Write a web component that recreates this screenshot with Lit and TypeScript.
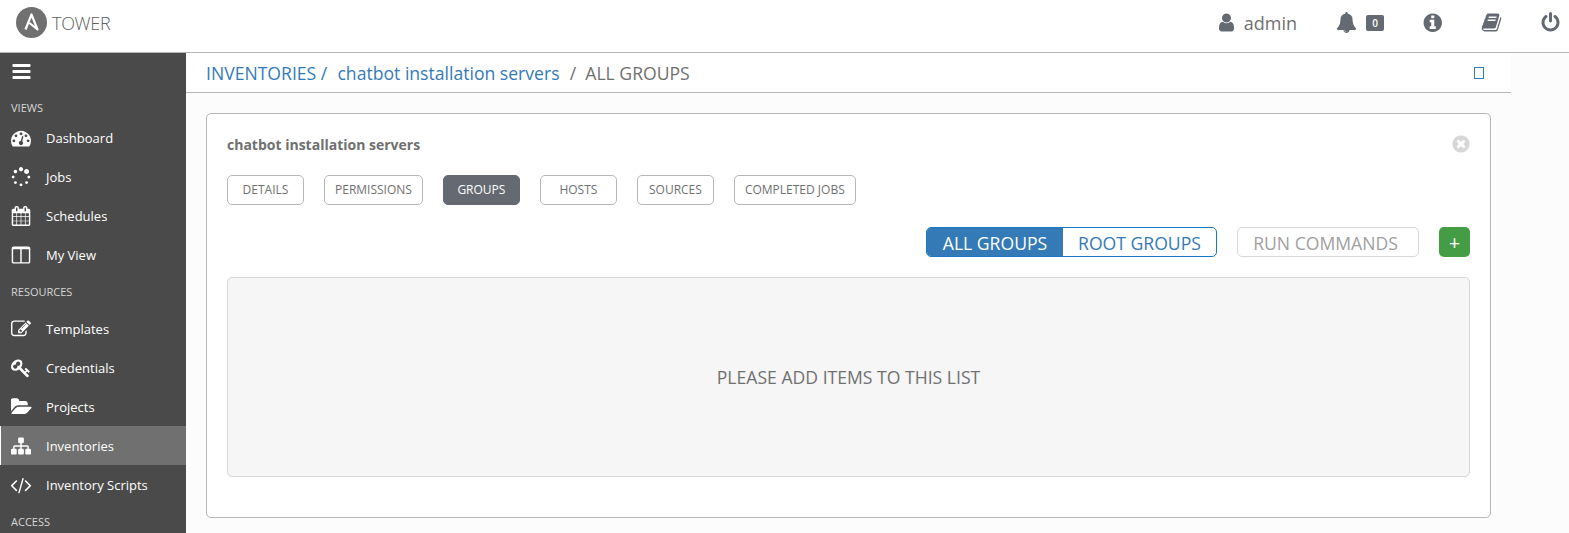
import { LitElement, html, css, svg } from 'lit'
import { customElement } from 'lit/decorators.js'

// font awesome 4 glyphs on the 1792 grid, wide ones carry their own width
const ICONS: Record<string, { d: string; w?: number }> = {
  bars: { d: 'M1664 1344v128q0 26-19 45t-45 19h-1408q-26 0-45-19t-19-45v-128q0-26 19-45t45-19h1408q26 0 45 19t19 45zm0-512v128q0 26-19 45t-45 19h-1408q-26 0-45-19t-19-45v-128q0-26 19-45t45-19h1408q26 0 45 19t19 45zm0-512v128q0 26-19 45t-45 19h-1408q-26 0-45-19t-19-45v-128q0-26 19-45t45-19h1408q26 0 45 19t19 45z' },
  bell: { d: 'M912 1696q0-16-16-16-59 0-101.500-42.500t-42.500-101.500q0-16-16-16t-16 16q0 73 51.500 124.500t124.500 51.500q16 0 16-16zm816-288q0 52-38 90t-90 38h-448q0 106-75 181t-181 75-181-75-75-181h-448q-52 0-90-38t-38-90q50-42 91-88t85-119.500 74.500-158.500 50-206 19.500-260q0-152 117-282.500t307-158.500q-8-19-8-39 0-40 28-68t68-28 68 28 28 68q0 20-8 39 190 28 307 158.500t117 282.500q0 139 19.500 260t50 206 74.500 158.500 85 119.500 91 88z' },
  user: { d: 'M1536 1399q0 109-62.500 187t-150.500 78h-854q-88 0-150.500-78t-62.500-187q0-85 8.500-160.500t31.500-152 58.500-131 94-89 134.500-34.500q131 128 313 128t313-128q76 0 134.500 34.500t94 89 58.500 131 31.500 152 8.500 160.500zm-256-887q0 159-112.500 271.500t-271.500 112.500-271.500-112.500-112.500-271.500 112.500-271.500 271.500-112.500 271.500 112.500 112.500 271.500z' },
  info: { d: 'M1152 1376v-160q0-14-9-23t-23-9h-96v-512q0-14-9-23t-23-9h-320q-14 0-23 9t-9 23v160q0 14 9 23t23 9h96v320h-96q-14 0-23 9t-9 23v160q0 14 9 23t23 9h448q14 0 23-9t9-23zm-128-896v-160q0-14-9-23t-23-9h-192q-14 0-23 9t-9 23v160q0 14 9 23t23 9h192q14 0 23-9t9-23zm640 416q0 209-103 385.500t-279.500 279.500-385.500 103-385.500-103-279.500-279.500-103-385.500 103-385.500 279.500-279.500 385.500-103 385.500 103 279.500 279.500 103 385.500z' },
  power: { d: 'M1664 896q0 156-61 298t-164 245-245 164-298 61-298-61-245-164-164-245-61-298q0-182 80.500-343t226.500-270q43-32 95.500-25t83.500 50q32 42 24.500 94.500t-49.500 84.500q-98 74-151.500 181t-53.500 228q0 104 40.500 198.500t109.500 163.500 163.500 109.500 198.500 40.500 198.500-40.500 163.500-109.500 109.500-163.500 40.500-198.500q0-121-53.500-228t-151.500-181q-42-32-49.500-84.500t24.500-94.500q31-43 84-50t95 25q146 109 226.500 270t80.500 343zm-640-768v640q0 52-38 90t-90 38-90-38-38-90v-640q0-52 38-90t90-38 90 38 38 90z' },
  book: { d: 'M1703 478q40 57 18 129l-275 906q-19 64-76.500 107.500t-122.500 43.500h-923q-77 0-148.500-53.500t-99.500-131.500q-24-67-2-127 0-4 3-27t4-37q1-8-3-21.500t-3-19.500q2-11 8-21t16.500-23.500 16.500-23.500q23-38 45-91.500t30-91.500q3-10 .5-30t-.5-28q3-11 17-28t17-23q21-36 42-92t25-90q1-9-2.500-32t.5-28q4-13 22-30.500t22-22.500q19-26 42.500-84.500t27.500-96.500q1-8-3-25.500t-2-26.500q2-8 9-18t18-23 17-21q8-12 16.500-30.500t15-35 16-36 19.500-32 26.500-23.500 36-11.500 47.500 5.500l-1 3q38-9 51-9h761q74 0 114 56t18 130l-274 906q-36 119-71.500 153.500t-128.500 34.500h-869q-27 0-38 15-11 16-1 43 24 70 144 70h923q29 0 56-15.500t35-41.500l300-987q7-22 5-57 38 15 59 43zm-1064 2q-4 13 2 22.500t20 9.500h608q13 0 25.500-9.500t16.500-22.500l21-64q4-13-2-22.500t-20-9.500h-608q-13 0-25.500 9.500t-16.500 22.500zm-83 256q-4 13 2 22.500t20 9.500h608q13 0 25.500-9.500t16.500-22.500l21-64q4-13-2-22.500t-20-9.500h-608q-13 0-25.500 9.500t-16.500 22.500z' },
  close: { d: 'M1277 1122q0-26-19-45l-181-181 181-181q19-19 19-45 0-27-19-46l-90-90q-19-19-46-19-26 0-45 19l-181 181-181-181q-19-19-45-19-27 0-46 19l-90 90q-19 19-19 46 0 26 19 45l181 181-181 181q-19 19-19 45 0 27 19 46l90 90q19 19 46 19 26 0 45-19l181-181 181 181q19 19 45 19 27 0 46-19l90-90q19-19 19-46zm387-226q0 209-103 385.500t-279.500 279.500-385.500 103-385.500-103-279.500-279.500-103-385.500 103-385.500 279.500-279.500 385.500-103 385.500 103 279.500 279.500 103 385.500z' },
  dashboard: { d: 'M384 1152q0-53-37.500-90.500t-90.500-37.500-90.500 37.500-37.500 90.500 37.500 90.500 90.500 37.500 90.500-37.500 37.500-90.500zm192-448q0-53-37.500-90.500t-90.500-37.500-90.500 37.500-37.500 90.500 37.500 90.500 90.500 37.500 90.500-37.500 37.500-90.500zm428 481l101-382q6-26-7.500-48.500t-38.500-29.500-48 6.500-30 39.500l-101 382q-60 5-107 43.500t-63 98.500q-20 77 20 146t117 89 146-20 89-117q16-60-6-117t-72-91zm660-33q0-53-37.500-90.500t-90.500-37.500-90.500 37.500-37.500 90.500 37.500 90.500 90.500 37.500 90.500-37.500 37.500-90.500zm-640-640q0-53-37.500-90.500t-90.500-37.500-90.500 37.500-37.500 90.500 37.500 90.500 90.500 37.500 90.500-37.500 37.500-90.500zm448 192q0-53-37.500-90.500t-90.500-37.500-90.500 37.500-37.500 90.500 37.500 90.500 90.500 37.500 90.500-37.500 37.500-90.500zm320 448q0 261-141 483-19 29-54 29h-1402q-35 0-54-29-141-221-141-483 0-182 71-348t191-286 286-191 348-71 348 71 286 191 191 286 71 348z' },
  jobs: { d: 'M526 1394q0 53-37.500 90.500t-90.500 37.500q-52 0-90-38t-38-90q0-53 37.500-90.500t90.500-37.500 90.500 37.500 37.500 90.500zm498 206q0 53-37.500 90.500t-90.500 37.500-90.500-37.500-37.500-90.500 37.500-90.500 90.500-37.500 90.500 37.500 37.500 90.500zm-704-704q0 53-37.500 90.500t-90.500 37.500-90.500-37.500-37.500-90.500 37.500-90.500 90.500-37.500 90.500 37.500 37.500 90.500zm1202 498q0 52-38 90t-90 38q-53 0-90.500-37.500t-37.500-90.500 37.500-90.500 90.500-37.500 90.500 37.500 37.500 90.500zm-964-996q0 66-47 113t-113 47-113-47-47-113 47-113 113-47 113 47 47 113zm1170 498q0 53-37.500 90.500t-90.500 37.500-90.500-37.500-37.500-90.500 37.500-90.500 90.500-37.500 90.500 37.500 37.500 90.500zm-640-704q0 80-56 136t-136 56-136-56-56-136 56-136 136-56 136 56 56 136zm530 206q0 93-66 158.500t-158 65.500q-93 0-158.500-65.500t-65.500-158.500q0-92 65.500-158t158.500-66q92 0 158 66t66 158z' },
  schedules: { d: 'M192 1664h288v-288h-288v288zm352 0h320v-288h-320v288zm-352-352h288v-320h-288v320zm352 0h320v-320h-320v320zm-352-384h288v-288h-288v288zm736 736h320v-288h-320v288zm-384-736h320v-288h-320v288zm768 736h288v-288h-288v288zm-384-352h320v-320h-320v320zm-352-864v-288q0-13-9.500-22.500t-22.500-9.500h-64q-13 0-22.500 9.500t-9.500 22.500v288q0 13 9.500 22.500t22.500 9.500h64q13 0 22.500-9.500t9.500-22.500zm736 864h288v-320h-288v320zm-384-384h320v-288h-320v288zm384 0h288v-288h-288v288zm32-480v-288q0-13-9.500-22.500t-22.500-9.500h-64q-13 0-22.500 9.500t-9.500 22.500v288q0 13 9.500 22.500t22.500 9.500h64q13 0 22.500-9.500t9.500-22.500zm384-64v1280q0 52-38 90t-90 38h-1408q-52 0-90-38t-38-90v-1280q0-52 38-90t90-38h128v-96q0-66 47-113t113-47h64q66 0 113 47t47 113v96h384v-96q0-66 47-113t113-47h64q66 0 113 47t47 113v96h128q52 0 90 38t38 90z' },
  view: { d: 'M224 1536h608v-1152h-640v1120q0 13 9.500 22.500t22.500 9.500zm1376-32v-1120h-640v1152h608q13 0 22.500-9.500t9.500-22.500zm128-1216v1216q0 66-47 113t-113 47h-1344q-66 0-113-47t-47-113v-1216q0-66 47-113t113-47h1344q66 0 113 47t47 113z' },
  templates: { w: 1900, d: 'M888 1184l116-116-152-152-116 116v56h96v96h56zm440-720q-16-16-33 1l-350 350q-17 17-1 33t33-1l350-350q17-17 1-33zm80 594v190q0 119-84.500 203.500t-203.500 84.500h-832q-119 0-203.500-84.500t-84.500-203.500v-832q0-119 84.500-203.500t203.500-84.500h832q63 0 117 25 15 7 18 23 3 17-9 29l-49 49q-14 14-32 8-23-6-45-6h-832q-66 0-113 47t-47 113v832q0 66 47 113t113 47h832q66 0 113-47t47-113v-126q0-13 9-22l64-64q15-15 35-7t20 29zm-96-738l288 288-672 672h-288v-288zm444 132l-92 92-288-288 92-92q28-28 68-28t68 28l152 152q28 28 28 68t-28 68z' },
  credentials: { d: 'M832 512q0-80-56-136t-136-56-136 56-56 136q0 42 19 83-41-19-83-19-80 0-136 56t-56 136 56 136 136 56 136-56 56-136q0-42-19-83 41 19 83 19 80 0 136-56t56-136zm851 704q0 17-49 66t-66 49q-9 0-28.500-16t-36.500-33-38.500-40-24.500-26l-96 96 220 220q28 28 28 68 0 42-39 81t-81 39q-40 0-68-28l-671-671q-176 131-365 131-163 0-265.500-102.500t-102.500-265.500q0-160 95-313t248-248 313-95q163 0 265.500 102.500t102.500 265.500q0 189-131 365l355 355 96-96q-3-3-26-24.500t-40-38.500-33-36.500-16-28.500q0-17 49-66t66-49q13 0 23 10 6 6 46 44.500t82 79.500 86.500 86 73 78 28.500 41z' },
  projects: { w: 1900, d: 'M1845 931q0 35-35 73l-336 396q-43 51-120.500 86.500t-143.500 35.500h-1088q-34 0-60.500-13t-26.500-43q0-35 35-73l336-396q43-51 120.500-86.500t143.500-35.500h1088q34 0 60.500 13t26.500 43zm-343-344v160h-832q-94 0-197 47.500t-164 119.500l-337 396-5 6q0-4-.5-12.500t-.5-12.500v-960q0-92 66-158t158-66h320q92 0 158 66t66 158v32h544q92 0 158 66t66 158z' },
  inventories: { d: 'M1792 1248v320q0 40-28 68t-68 28h-320q-40 0-68-28t-28-68v-320q0-40 28-68t68-28h96v-192h-512v192h96q40 0 68 28t28 68v320q0 40-28 68t-68 28h-320q-40 0-68-28t-28-68v-320q0-40 28-68t68-28h96v-192h-512v192h96q40 0 68 28t28 68v320q0 40-28 68t-68 28h-320q-40 0-68-28t-28-68v-320q0-40 28-68t68-28h96v-192q0-52 38-90t90-38h512v-192h-96q-40 0-68-28t-28-68v-320q0-40 28-68t68-28h320q40 0 68 28t28 68v320q0 40-28 68t-68 28h-96v192h512q52 0 90 38t38 90v192h96q40 0 68 28t28 68z' },
  scripts: { w: 1900, d: 'M553 1399l-50 50q-10 10-23 10t-23-10l-466-466q-10-10-10-23t10-23l466-466q10-10 23-10t23 10l50 50q10 10 10 23t-10 23l-393 393 393 393q10 10 10 23t-10 23zm591-1067l-373 1291q-4 13-15.500 19.500t-23.500 2.500l-62-17q-13-4-19.500-15.500t-2.500-24.500l373-1291q4-13 15.500-19.500t23.500-2.500l62 17q13 4 19.500 15.500t2.500 24.500zm657 651l-466 466q-10 10-23 10t-23-10l-50-50q-10-10-10-23t10-23l393-393-393-393q-10-10-10-23t10-23l50-50q10-10 23-10t23 10l466 466q10 10 10 23t-10 23z' },
}

type NavRow =
  | { section: string }
  | { label: string; icon: string; active?: boolean }

const NAV: ReadonlyArray<NavRow> = [
  { section: 'VIEWS' },
  { label: 'Dashboard', icon: 'dashboard' },
  { label: 'Jobs', icon: 'jobs' },
  { label: 'Schedules', icon: 'schedules' },
  { label: 'My View', icon: 'view' },
  { section: 'RESOURCES' },
  { label: 'Templates', icon: 'templates' },
  { label: 'Credentials', icon: 'credentials' },
  { label: 'Projects', icon: 'projects' },
  { label: 'Inventories', icon: 'inventories', active: true },
  { label: 'Inventory Scripts', icon: 'scripts' },
  { section: 'ACCESS' },
]

const TABS = ['DETAILS', 'PERMISSIONS', 'GROUPS', 'HOSTS', 'SOURCES', 'COMPLETED JOBS']

const icon = (name: string, size: number) => {
  const { d, w = 1792 } = ICONS[name]
  return html`<svg class="icon" width=${(size * w) / 1792} height=${size} viewBox="0 0 ${w} 1792" fill="currentColor">
    ${svg`<path d=${d}></path>`}
  </svg>`
}

@customElement('app-root')
export class AppRoot extends LitElement {
  static override styles = css`
    :host {
      display: block;
      height: 533px;
      overflow: hidden;
      background: #fcfcfc;
      font-family: 'Open Sans', sans-serif;
      color: #707070;
    }

    .icon {
      display: block;
      flex: none;
    }

    header {
      height: 52px;
      display: flex;
      align-items: center;
      background: #fff;
      border-bottom: 1px solid #b7b7b7;
    }

    .brand,
    .tools {
      display: flex;
      align-items: center;
      margin-bottom: 7px;
    }

    .brand {
      gap: 5px;
      margin-left: 16px;
      font-size: 18px;
      font-weight: 300;
      letter-spacing: -0.3px;
      color: #606060;
    }

    .tools {
      margin-left: auto;
      color: #646972;
    }

    .user {
      font-size: 18px;
      color: #707070;
      margin: 0 39px 0 7px;
    }

    .badge {
      width: 18px;
      height: 16px;
      margin: 0 37.5px 0 9px;
      border-radius: 2px;
      background: #646972;
      color: #fff;
      font-size: 10px;
      font-weight: 600;
      display: flex;
      align-items: center;
      justify-content: center;
    }

    .book {
      margin: 0 38px 0 37.5px;
    }

    .power {
      margin-right: 8.5px;
    }

    .body {
      display: flex;
      height: 480px;
    }

    nav {
      width: 186px;
      flex: none;
      background: #4a4a4a;
      color: #fff;
      overflow: hidden;
    }

    .menu {
      height: 37px;
      display: flex;
      align-items: center;
      padding-left: 10.5px;
    }

    .section {
      height: 35px;
      display: flex;
      align-items: center;
      padding-left: 11px;
      font-size: 11px;
      color: #d7d7d7;
    }

    .menu + .section {
      height: 22px;
      padding-top: 6px;
    }

    .item {
      height: 39px;
      display: flex;
      align-items: center;
      padding-left: 11px;
      font-size: 13px;
    }

    .slot {
      width: 35px;
      flex: none;
    }

    .item.active {
      background: #707070;
      box-shadow: inset 1px 0 0 #fff;
    }

    main {
      flex: 1;
      min-width: 0;
      padding-right: 58px;
    }

    .crumbs {
      height: 39px;
      display: flex;
      align-items: center;
      padding: 0 27px 0 20px;
      background: #fff;
      border-bottom: 1px solid #b7b7b7;
      font-size: 17.6px;
      white-space: pre;
    }

    .crumbs .link {
      color: #337ab7;
    }

    .crumbs .gap {
      margin-left: 1px;
    }

    .tofu {
      margin-left: auto;
      width: 8px;
      height: 10px;
      border: 1px solid #337ab7;
    }

    .card {
      margin: 20px 20px 0;
      height: 405px;
      box-sizing: border-box;
      padding: 20px;
      background: #fff;
      border: 1px solid #b7b7b7;
      border-radius: 5px;
    }

    .title {
      height: 21px;
      display: flex;
      align-items: center;
      justify-content: space-between;
      font-size: 14px;
      font-weight: 700;
      color: #707070;
    }

    .close {
      color: #d7d7d7;
      margin: -2px -1px 0 0;
    }

    .tabs {
      display: flex;
      gap: 20px;
      margin-top: 20px;
    }

    .tab {
      min-width: 77px;
      height: 30px;
      box-sizing: border-box;
      padding: 0 10px 1px;
      display: flex;
      align-items: center;
      justify-content: center;
      border: 1px solid #b7b7b7;
      border-radius: 5px;
      font-size: 12px;
      color: #707070;
    }

    .tab.active {
      background: #646972;
      border-color: #646972;
      color: #fff;
    }

    .actions {
      display: flex;
      justify-content: flex-end;
      align-items: center;
      margin-top: 22px;
    }

    .toggle {
      display: flex;
      height: 30px;
      box-sizing: border-box;
      border: 1px solid #1778c3;
      border-radius: 5px;
      overflow: hidden;
      font-size: 17.6px;
      margin-right: 20px;
    }

    .toggle span {
      display: flex;
      align-items: center;
      justify-content: center;
      padding-top: 1px;
    }

    .toggle .on {
      width: 136px;
      background: #337ab7;
      color: #fff;
    }

    .toggle .off {
      width: 153px;
      color: #337ab7;
    }

    .run {
      width: 182px;
      height: 30px;
      box-sizing: border-box;
      padding: 1px 5px 0 0;
      border: 1px solid #d7d7d7;
      border-radius: 5px;
      display: flex;
      align-items: center;
      justify-content: center;
      font-size: 17.6px;
      color: #a0a0a0;
    }

    .add {
      width: 31px;
      height: 30px;
      margin-left: 20px;
      border-radius: 5px;
      background: #449d44;
      color: #fff;
      display: flex;
      align-items: center;
      justify-content: center;
      font-size: 20px;
    }

    .empty {
      height: 200px;
      box-sizing: border-box;
      margin-top: 20px;
      background: #f6f6f6;
      border: 1px solid #d7d7d7;
      border-radius: 5px;
      display: flex;
      align-items: center;
      justify-content: center;
      font-size: 17.6px;
      color: #707070;
    }
  `

  private renderNav(row: NavRow) {
    if ('section' in row) return html`<div class="section">${row.section}</div>`
    return html`<div class="item ${row.active ? 'active' : ''}">
      <span class="slot">${icon(row.icon, 20)}</span><span>${row.label}</span>
    </div>`
  }

  override render() {
    return html`
      <header>
        <div class="brand">
          <svg width="31" height="31" viewBox="0 0 31 31">
            <circle cx="15.5" cy="15.5" r="15.5" fill="#707070"></circle>
            <path d="M9.5 22.5 15.5 7.5 21.5 22.5 13.5 16" fill="none" stroke="#fff" stroke-width="2.2" stroke-linejoin="round"></path>
          </svg>
          <span>TOWER</span>
        </div>
        <div class="tools">
          ${icon('user', 21)}
          <span class="user">admin</span>
          ${icon('bell', 21)}
          <span class="badge">0</span>
          ${icon('info', 21.5)}
          <span class="book">${icon('book', 21)}</span>
          <span class="power">${icon('power', 21)}</span>
        </div>
      </header>
      <div class="body">
        <nav>
          <div class="menu">${icon('bars', 21)}</div>
          ${NAV.map(row => this.renderNav(row))}
        </nav>
        <main>
          <div class="crumbs">
            <span class="link">INVENTORIES /  </span><span class="link gap">chatbot installation servers</span><span class="gap">  /  ALL GROUPS</span>
            <span class="tofu"></span>
          </div>
          <section class="card">
            <div class="title">
              <span>chatbot installation servers</span>
              <span class="close">${icon('close', 20)}</span>
            </div>
            <div class="tabs">
              ${TABS.map(t => html`<div class="tab ${t === 'GROUPS' ? 'active' : ''}">${t}</div>`)}
            </div>
            <div class="actions">
              <div class="toggle">
                <span class="on">ALL GROUPS</span>
                <span class="off">ROOT GROUPS</span>
              </div>
              <div class="run">RUN COMMANDS</div>
              <div class="add">+</div>
            </div>
            <div class="empty">PLEASE ADD ITEMS TO THIS LIST</div>
          </section>
        </main>
      </div>
    `
  }
}

declare global {
  interface HTMLElementTagNameMap {
    'app-root': AppRoot
  }
}
